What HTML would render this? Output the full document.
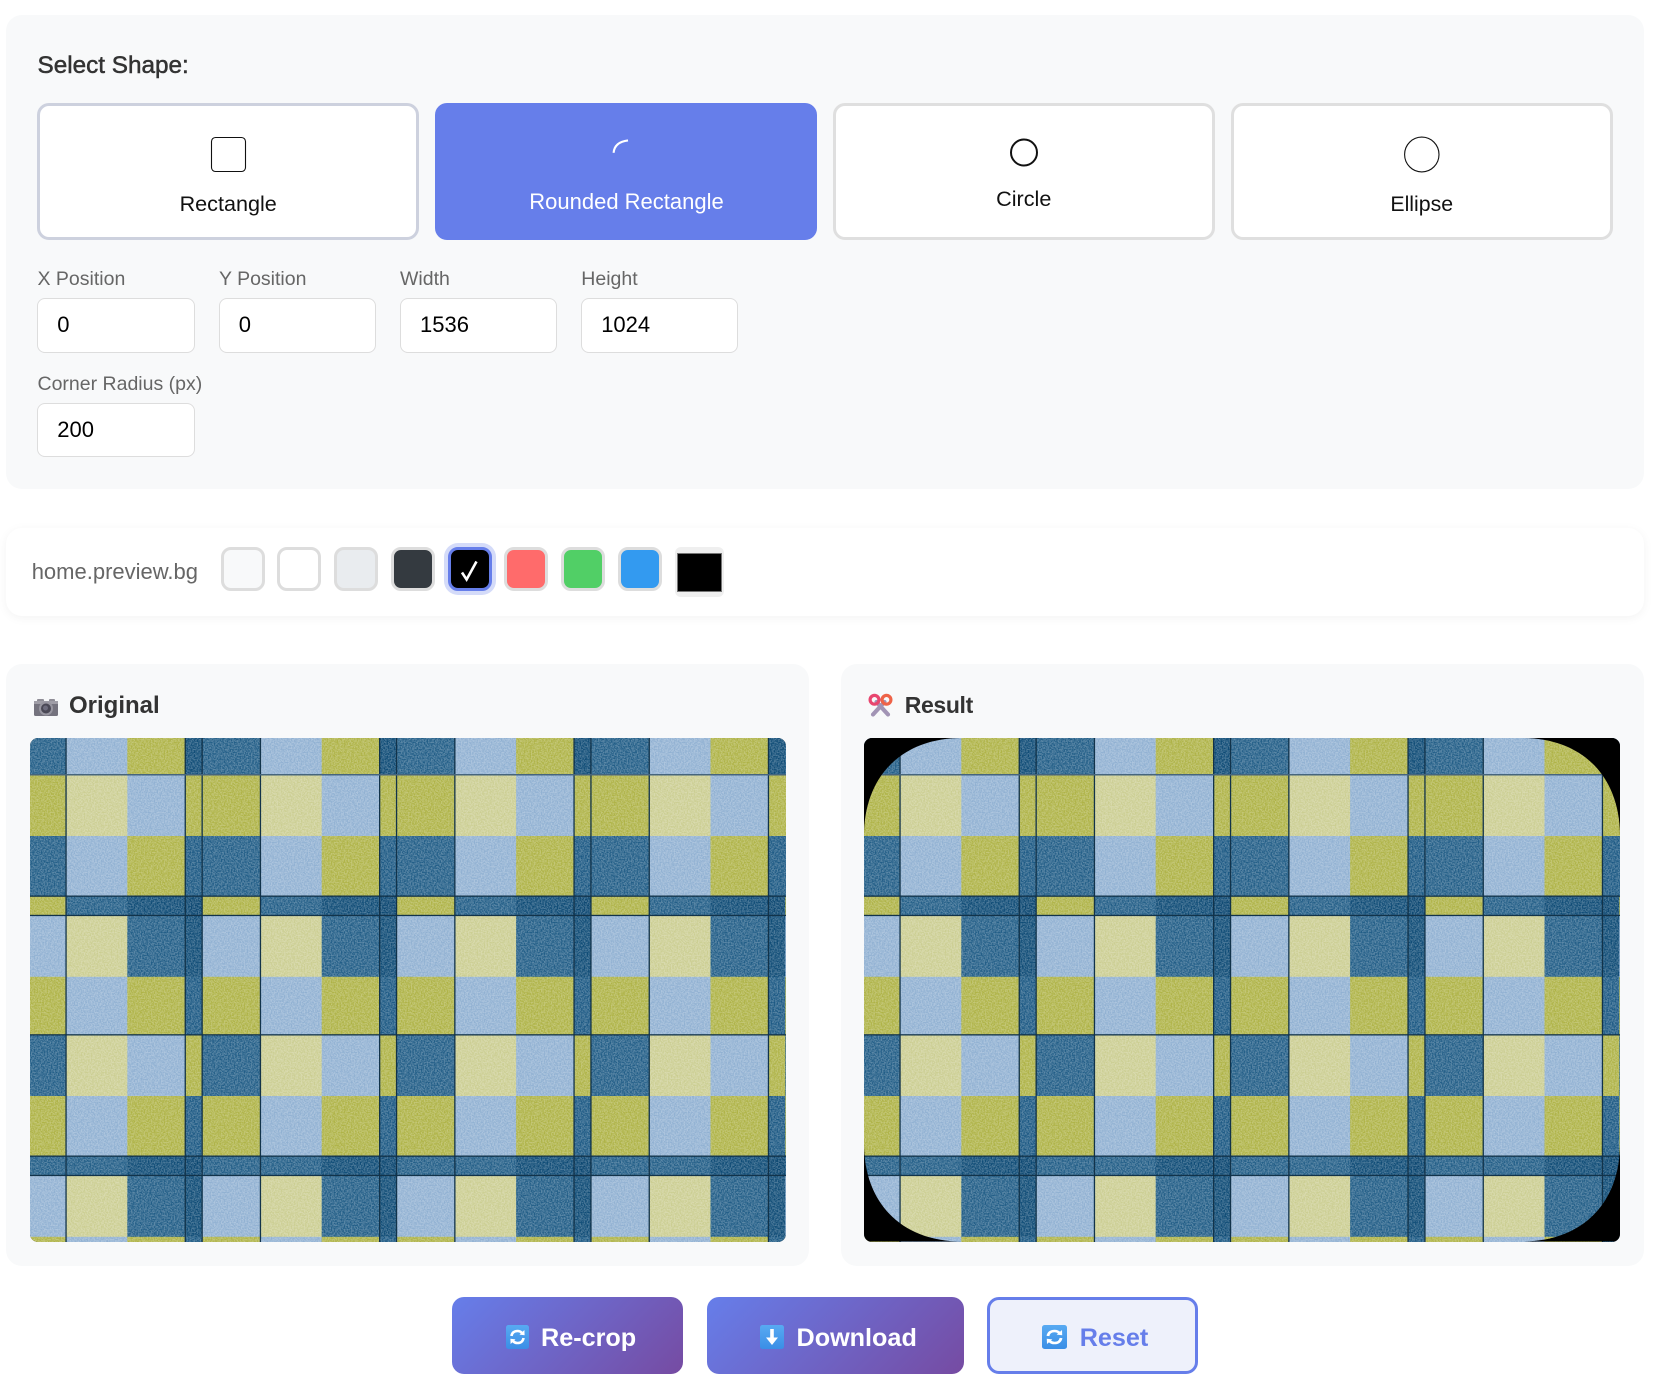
<!DOCTYPE html>
<html lang="en">
<head>
<meta charset="utf-8">
<title>Shape Crop</title>
<style>
html,body{margin:0;padding:0;background:#fff}
body{position:relative;width:1663px;height:1389px;overflow:hidden;font-family:"Liberation Sans",sans-serif;color:#333}
.a{position:absolute;box-sizing:border-box}
.t{position:absolute;line-height:0;white-space:nowrap}
.panel{background:#f8f9fa;border-radius:16px}
.shape{background:#fff;border:3px solid #dfdfdf;border-radius:12px}
.st{font-size:21.6px;color:#111;text-align:center}
.lab{font-size:19.5px;color:#666}
input{position:absolute;box-sizing:border-box;width:157px;height:55px;border:1px solid #ddd;border-radius:8px;background:#fff;padding:0 0 1px 19px;margin:0;font:22px "Liberation Sans",sans-serif;color:#000;outline:0}
.sw{position:absolute;box-sizing:border-box;top:547px;width:44px;height:44px;border:3px solid #ddd;border-radius:10px}
.h{font-size:24px;font-weight:bold;color:#333}
.imgbox{position:absolute;top:738px;width:756px;height:503.5px;border-radius:8px;overflow:hidden;background:#000}
.imgbox svg{display:block}
.btn{position:absolute;top:1297px;height:77px;border-radius:12px;background:linear-gradient(135deg,#667eea,#764ba2)}
.bt{font-size:25.2px;font-weight:bold;color:#fff}
</style>
</head>
<body>
<svg width="0" height="0" style="position:absolute">
<defs>
<filter id="n" x="0" y="0" width="100%" height="100%" color-interpolation-filters="sRGB">
<feTurbulence type="fractalNoise" baseFrequency="0.7" numOctaves="2" seed="3" result="t"/>
<feColorMatrix in="t" type="matrix" values="3 0 0 0 -1 3 0 0 0 -1 3 0 0 0 -1 0 0 0 0 1" result="g"/>
<feComposite in="SourceGraphic" in2="g" operator="arithmetic" k1="-0.3" k2="1.15" k3="0.3" k4="-0.15"/>
</filter>
<g id="tile">
<rect x="0" y="0" width="58.8" height="37" fill="#3f7397"/><rect x="58.3" y="0" width="61.8" height="37" fill="#9fbbd8"/><rect x="119.6" y="0" width="58.5" height="37" fill="#b9bd5f"/><rect x="177.6" y="0" width="17.5" height="37" fill="#2e6388"/>
<rect x="0" y="36.7" width="58.8" height="61.8" fill="#b9bd5f"/><rect x="58.3" y="36.7" width="61.8" height="61.8" fill="#d2d4a0"/><rect x="119.6" y="36.7" width="58.5" height="61.8" fill="#9fbbd8"/><rect x="177.6" y="36.7" width="17.5" height="61.8" fill="#b9bd5f"/>
<rect x="0" y="98" width="58.8" height="60.5" fill="#3f7397"/><rect x="58.3" y="98" width="61.8" height="60.5" fill="#9fbbd8"/><rect x="119.6" y="98" width="58.5" height="60.5" fill="#b9bd5f"/><rect x="177.6" y="98" width="17.5" height="60.5" fill="#3a6f94"/>
<rect x="0" y="158" width="58.8" height="19.8" fill="#b9bd5f"/><rect x="58.3" y="158" width="61.8" height="19.8" fill="#3f7397"/><rect x="119.6" y="158" width="58.5" height="19.8" fill="#2e6388"/><rect x="177.6" y="158" width="17.5" height="19.8" fill="#2a5e83"/>
<rect x="0" y="177.3" width="58.8" height="62" fill="#9fbbd8"/><rect x="58.3" y="177.3" width="61.8" height="62" fill="#d2d4a0"/><rect x="119.6" y="177.3" width="58.5" height="62" fill="#3f7397"/><rect x="177.6" y="177.3" width="17.5" height="62" fill="#2e6388"/>
<rect x="0" y="238.8" width="58.8" height="58.4" fill="#b9bd5f"/><rect x="58.3" y="238.8" width="61.8" height="58.4" fill="#9fbbd8"/><rect x="119.6" y="238.8" width="58.5" height="58.4" fill="#b9bd5f"/><rect x="177.6" y="238.8" width="17.5" height="58.4" fill="#3a6f94"/>
<rect x="0" y="296.7" width="58.8" height="61.8" fill="#3f7397"/><rect x="58.3" y="296.7" width="61.8" height="61.8" fill="#d2d4a0"/><rect x="119.6" y="296.7" width="58.5" height="61.8" fill="#9fbbd8"/><rect x="177.6" y="296.7" width="17.5" height="61.8" fill="#b9bd5f"/>
<rect x="0" y="358" width="58.8" height="60.5" fill="#b9bd5f"/><rect x="58.3" y="358" width="61.8" height="60.5" fill="#9fbbd8"/><rect x="119.6" y="358" width="58.5" height="60.5" fill="#b9bd5f"/><rect x="177.6" y="358" width="17.5" height="60.5" fill="#3a6f94"/>
<rect x="0" y="418" width="58.8" height="19.8" fill="#3f7397"/><rect x="58.3" y="418" width="61.8" height="19.8" fill="#3f7397"/><rect x="119.6" y="418" width="58.5" height="19.8" fill="#2e6388"/><rect x="177.6" y="418" width="17.5" height="19.8" fill="#2a5e83"/>
<rect x="0" y="437.3" width="58.8" height="62" fill="#9fbbd8"/><rect x="58.3" y="437.3" width="61.8" height="62" fill="#d2d4a0"/><rect x="119.6" y="437.3" width="58.5" height="62" fill="#3f7397"/><rect x="177.6" y="437.3" width="17.5" height="62" fill="#2e6388"/>
<rect x="0" y="498.8" width="58.8" height="6" fill="#b9bd5f"/><rect x="58.3" y="498.8" width="61.8" height="6" fill="#9fbbd8"/><rect x="119.6" y="498.8" width="58.5" height="6" fill="#b9bd5f"/><rect x="177.6" y="498.8" width="17.5" height="6" fill="#3a6f94"/>
</g>
<g id="vl">
<rect x="57.7" y="0" width="1.3" height="505" fill="#12334a"/><rect x="176.9" y="0" width="1.3" height="505" fill="#12334a"/>
</g>
<g id="grid">
<g filter="url(#n)">
<use href="#tile" x="-22.3"/><use href="#tile" x="172.1"/><use href="#tile" x="366.5"/><use href="#tile" x="560.9"/><use href="#tile" x="755.3"/>
</g>
<use href="#vl" x="-22.3"/><use href="#vl" x="172.1"/><use href="#vl" x="366.5"/><use href="#vl" x="560.9"/>
<rect x="171.5" y="0" width="1.3" height="505" fill="#12334a"/><rect x="365.9" y="0" width="1.3" height="505" fill="#12334a"/><rect x="560.3" y="0" width="1.3" height="505" fill="#12334a"/>
<rect x="0" y="36" width="756" height="1.5" fill="#46657d"/>
<rect x="0" y="157.5" width="756" height="1.3" fill="#12334a"/>
<rect x="0" y="176.8" width="756" height="1.3" fill="#12334a"/>
<rect x="0" y="296.2" width="756" height="1.3" fill="#12334a"/>
<rect x="0" y="417.5" width="756" height="1.3" fill="#12334a"/>
<rect x="0" y="436.8" width="756" height="1.3" fill="#12334a"/>
</g>
<linearGradient id="blue" x1="0" y1="0" x2="0" y2="1"><stop offset="0" stop-color="#58aaf2"/><stop offset="1" stop-color="#3a8ee6"/></linearGradient>
<g id="loop">
<rect x="0" y="0" width="23" height="24" rx="2.5" fill="url(#blue)"/>
<path d="M5.5 11 C6 7.5 8.5 6 11.5 6 C13.5 6 15 6.8 16 8" fill="none" stroke="#fff" stroke-width="2.6"/>
<path d="M13.5 9.6 L18.6 10.2 L18.4 5 Z" fill="#fff"/>
<path d="M17.5 13 C17 16.5 14.5 18 11.5 18 C9.5 18 8 17.2 7 16" fill="none" stroke="#fff" stroke-width="2.6"/>
<path d="M9.5 14.4 L4.4 13.8 L4.6 19 Z" fill="#fff"/>
</g>
</defs>
</svg>

<!-- Shape panel -->
<div class="a panel" style="left:6px;top:15px;width:1638px;height:474px"></div>
<div class="t" style="left:37.5px;top:65.7px;font-size:24.3px;color:#333;-webkit-text-stroke:.5px #333">Select Shape:</div>

<div class="a shape" style="left:37.2px;top:103px;width:382px;height:137px;border-color:#cdd1de"></div>
<svg class="a" style="left:210px;top:136px" width="38" height="38"><rect x="1.5" y="1.5" width="34" height="34" rx="4" fill="none" stroke="#111" stroke-width="1.1"/></svg>
<div class="t st" style="left:37.2px;width:382px;top:203.9px">Rectangle</div>

<div class="a shape" style="left:434.8px;top:103px;width:382.2px;height:137px;background:#667eea;border-color:#667eea"></div>
<svg class="a" style="left:608px;top:136px" width="24" height="20"><path d="M5.6 16.8 Q6.5 6 20 4.4" fill="none" stroke="#fff" stroke-width="2.1"/></svg>
<div class="t st" style="left:435.5px;width:382px;top:201.7px;color:#fff;font-size:22px">Rounded Rectangle</div>

<div class="a shape" style="left:833px;top:103px;width:381.5px;height:137px"></div>
<svg class="a" style="left:1008px;top:137px" width="32" height="32"><circle cx="16" cy="15.5" r="13" fill="none" stroke="#111" stroke-width="2"/></svg>
<div class="t st" style="left:833px;width:381.5px;top:199.2px">Circle</div>

<div class="a shape" style="left:1230.5px;top:103px;width:382.5px;height:137px"></div>
<svg class="a" style="left:1402px;top:135px" width="40" height="40"><ellipse cx="19.8" cy="19.5" rx="17.2" ry="17.4" fill="none" stroke="#111" stroke-width="1.1"/></svg>
<div class="t st" style="left:1230.5px;width:382.5px;top:203.9px;font-size:21.3px">Ellipse</div>

<div class="t lab" style="left:37.5px;top:279px">X Position</div>
<div class="t lab" style="left:219px;top:279px">Y Position</div>
<div class="t lab" style="left:400px;top:279px">Width</div>
<div class="t lab" style="left:581.3px;top:279px">Height</div>
<input style="left:37.3px;top:298.3px;width:157.5px" value="0">
<input style="left:218.8px;top:298.3px" value="0">
<input style="left:400px;top:298.3px" value="1536">
<input style="left:581.2px;top:298.3px" value="1024">
<div class="t lab" style="left:37.5px;top:384px">Corner Radius (px)</div>
<input style="left:37.3px;top:403.3px;height:53.5px;width:157.5px;padding-bottom:0" value="200">

<!-- Background swatches -->
<div class="a" style="left:6px;top:528px;width:1638px;height:88px;background:#fff;border-radius:16px;box-shadow:0 2px 10px rgba(0,0,0,.05)"></div>
<div class="t" style="left:31.7px;top:571.9px;font-size:22px;color:#666">home.preview.bg</div>
<div class="sw" style="left:221px;background:#f8f9fa"></div>
<div class="sw" style="left:277.3px;background:#fff"></div>
<div class="sw" style="left:334px;background:#e9ecef"></div>
<div class="sw" style="left:391px;background:#343a40"></div>
<div class="sw" style="left:448px;background:#000;border-color:#667eea;box-shadow:0 0 0 4px rgba(102,126,234,.28)"></div>
<svg class="a" style="left:448px;top:547px" width="44" height="44"><path d="M14 25.5 L18.6 32.5 L28.5 14.5" fill="none" stroke="#fff" stroke-width="2.6"/></svg>
<div class="sw" style="left:504px;background:#ff6b6b"></div>
<div class="sw" style="left:561px;background:#51cf66"></div>
<div class="sw" style="left:618px;background:#339af0"></div>
<div class="a" style="left:675px;top:547px;width:48.5px;height:50px;background:#efefef;border-radius:6px"></div>
<div class="a" style="left:677px;top:553px;width:45px;height:38.5px;background:#000;border:1px solid #767676"></div>

<!-- Original -->
<div class="a panel" style="left:6px;top:664px;width:803px;height:602px"></div>
<svg class="a" style="left:33.5px;top:698px" width="25" height="19">
<rect x="3" y="1" width="7" height="3.5" rx="1" fill="#8f8d96"/><rect x="15" y="1" width="6" height="3.5" rx="1" fill="#8f8d96"/>
<rect x="0" y="3" width="24" height="15" rx="1.5" fill="#75737e"/><rect x="0" y="3" width="24" height="3" fill="#a09ea7"/>
<circle cx="12" cy="10.5" r="7" fill="#9896a0"/><circle cx="12" cy="10.5" r="5" fill="#4a4855"/><circle cx="11.5" cy="10" r="2.5" fill="#6d6b7c"/>
</svg>
<div class="t h" style="left:69px;top:705.6px">Original</div>
<div class="imgbox" style="left:30px"><svg width="756" height="504" viewBox="0 0 756 504"><use href="#grid"/></svg></div>

<!-- Result -->
<div class="a panel" style="left:841px;top:664px;width:803px;height:602px"></div>
<svg class="a" style="left:868px;top:693px" width="25" height="24">
<path d="M5 21.5 L16.5 9 M20 21.5 L8.5 9" fill="none" stroke="#a294b5" stroke-width="4.2" stroke-linecap="round"/>
<circle cx="6.5" cy="6.8" r="4.4" fill="none" stroke="#e8466f" stroke-width="3.2"/>
<circle cx="18.5" cy="6.8" r="4.4" fill="none" stroke="#ee6348" stroke-width="3.2"/>
</svg>
<div class="t h" style="left:904.7px;top:705.4px;font-size:23px;letter-spacing:-.35px">Result</div>
<div class="imgbox" style="left:864px"><svg width="756" height="504" viewBox="0 0 756 504"><use href="#grid"/>
<path d="M0 0 H98 C38 0 0 38 0 98 Z M756 0 V98 C756 38 718 0 658 0 Z M0 503.5 V405.5 C0 465.5 38 503.5 98 503.5 Z M756 503.5 H658 C718 503.5 756 465.5 756 405.5 Z" fill="#000"/></svg></div>

<!-- Buttons -->
<div class="btn" style="left:452px;width:231px"></div>
<svg class="a" style="left:505.5px;top:1325px" width="24" height="24"><use href="#loop"/></svg>
<div class="t bt" style="left:541px;top:1338px">Re-crop</div>

<div class="btn" style="left:707px;width:257px"></div>
<svg class="a" style="left:759.5px;top:1325px" width="25" height="24">
<rect x="0" y="0" width="24" height="24" rx="2.5" fill="url(#blue)"/>
<path d="M10.2 4 H13.8 V12.5 H18 L12 20 L6 12.5 H10.2 Z" fill="#fff"/>
</svg>
<div class="t bt" style="left:796.5px;top:1338px">Download</div>

<div class="btn" style="left:987px;width:211px;background:#eef1fb;border:3px solid #667eea;box-sizing:border-box"></div>
<svg class="a" style="left:1042px;top:1325px" width="25" height="24" viewBox="0 0 23 24" preserveAspectRatio="none"><use href="#loop"/></svg>
<div class="t bt" style="left:1079.7px;top:1338px;color:#667eea">Reset</div>
</body>
</html>
